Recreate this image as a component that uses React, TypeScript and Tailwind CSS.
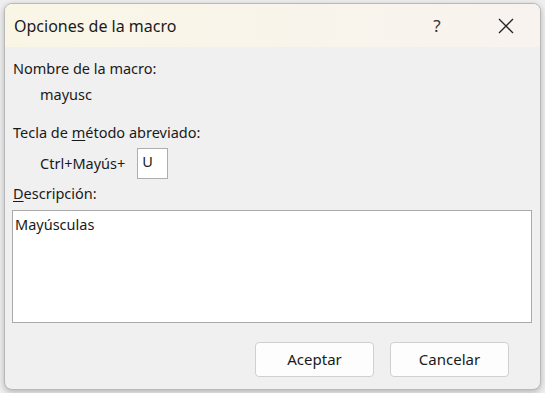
import React from "react";

const font = { fontFamily: '"Noto Sans", "Open Sans", sans-serif' };

export default function App() {
  return (
    <div
      className="w-[545px] h-[393px] bg-[#efefef] pt-[3px] pl-[4px] overflow-hidden"
      style={font}
    >
      <div className="w-[537px] h-[387px] flex flex-col rounded-[8px] border border-[#b9b9b9] bg-[#f0f0f0] shadow-[0_2px_6px_rgba(0,0,0,0.25)] overflow-hidden">
        {/* barra de título */}
        <div className="h-[43px] flex items-center bg-gradient-to-r from-[#faf6e6] to-[#f8f3ef] text-[#1a1a1a]">
          <span className="pl-[9px] text-[16px] flex-1">Opciones de la macro</span>
          <span className="w-[60px] mr-[8px] text-center text-[17px] text-[#333]">?</span>
          <span className="w-[62px] flex justify-center mr-[3px]">
            <svg width="16" height="16" viewBox="0 0 16 16" stroke="#222" strokeWidth="1.3">
              <path d="M1 1 L15 15 M15 1 L1 15" />
            </svg>
          </span>
        </div>

        {/* contenido */}
        <div className="flex-1 flex flex-col px-[8px] text-[14.5px] text-[#1a1a1a]">
          <div className="mt-[11px] h-[22px] flex items-center">Nombre de la macro:</div>
          <div className="mt-[4px] h-[22px] flex items-center pl-[27px]">mayusc</div>

          <div className="mt-[16px] h-[22px] flex items-center">
            Tecla de&nbsp;<span className="underline underline-offset-2">m</span>étodo abreviado:
          </div>
          <div className="mt-[4px] flex items-center pl-[27px]">
            <span>Ctrl+Mayús+</span>
            <div className="ml-[12px] w-[31px] h-[31px] bg-white border border-[#adadad] pl-[4px] leading-[24px]">
              U
            </div>
          </div>

          <div className="mt-[4px] h-[22px] flex items-center">
            <span className="underline underline-offset-2">D</span>escripción:
          </div>
          <div className="mt-[5px] -ml-[1px] h-[113px] bg-white border border-[#a9a9a9] px-[2px] pt-[3px]">
            Mayúsculas
          </div>

          <div className="mt-[19px] flex justify-end gap-[16px] pr-[23px]">
            <button className="w-[119px] h-[35px] bg-[#fdfdfd] border border-[#d0d0d0] rounded-[4px] text-[15px]">
              Aceptar
            </button>
            <button className="w-[119px] h-[35px] bg-[#fdfdfd] border border-[#d0d0d0] rounded-[4px] text-[15px]">
              Cancelar
            </button>
          </div>
        </div>
      </div>
    </div>
  );
}
